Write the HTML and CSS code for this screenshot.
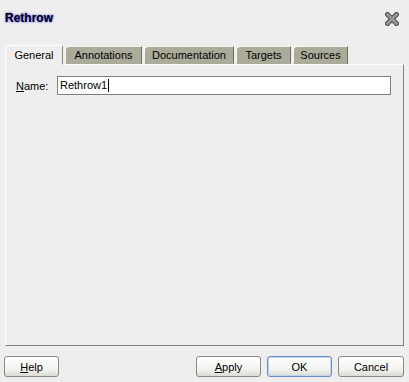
FILE: index.html
```html
<!DOCTYPE html>
<html lang="en">
<head>
    <meta charset="UTF-8">
    <meta name="viewport" content="width=device-width, initial-scale=1.0">
    <title>Rethrow</title>
    <link rel="stylesheet" href="styles.css">
</head>
<body>

    <div class="dialog">
        <header>
            <div class="title">Rethrow</div>
            <a href="#" class="close" title="Close">
                <svg width="14" height="14" viewBox="0 0 14 14">
                    <path d="M2.5 2.5 L11.5 11.5 M11.5 2.5 L2.5 11.5" stroke="#555" stroke-width="5" stroke-linecap="square"/>
                    <path d="M2.5 2.5 L11.5 11.5 M11.5 2.5 L2.5 11.5" stroke="#9a9a9a" stroke-width="2.6" stroke-linecap="square"/>
                </svg>
            </a>
        </header>

        <nav class="tabs">
            <a href="#" class="tab tab-general active">General</a>
            <a href="#" class="tab tab-annotations">Annotations</a>
            <a href="#" class="tab tab-docs">Documentation</a>
            <a href="#" class="tab tab-targets">Targets</a>
            <a href="#" class="tab tab-sources">Sources</a>
        </nav>

        <div class="panel">
            <div class="row">
                <label><u>N</u>ame:</label>
                <div class="textbox">Rethrow1<span class="caret"></span></div>
            </div>
        </div>

        <div class="buttons">
            <button type="button" class="help"><u>H</u>elp</button>
            <div class="right">
                <button type="button"><u>A</u>pply</button>
                <button type="button" class="default">OK</button>
                <button type="button" class="cancel">Cancel</button>
            </div>
        </div>
    </div>

</body>
</html>
```

FILE: styles.css
```css
body {
    font-family: "Liberation Sans", Arial, sans-serif;
    font-size: 11px;
    margin: 0;
    padding: 0;
    background-color: #eeeeee;
    color: #000;
}
.dialog {
    height: 382px;
    display: flex;
    flex-direction: column;
}
header {
    height: 45px;
    padding: 0 10px 0 5px;
    display: flex;
    justify-content: space-between;
    align-items: center;
    box-sizing: border-box;
}
header .title {
    font-size: 12px;
    font-weight: bold;
    color: #000;
    text-shadow: 0 0 2px #6a6aff, 0 0 1px #8a8aff, 0 0 3px #b0b0ff;
    margin-top: -9px;
}
header .close {
    display: block;
    width: 14px;
    height: 14px;
    margin-top: -8px;
}
header .close svg {
    display: block;
}
.tabs {
    display: flex;
    align-items: flex-end;
    gap: 2px;
    height: 19px;
    margin: 0 5px;
    position: relative;
    z-index: 1;
}
.tab {
    height: 18px;
    line-height: 17px;
    padding: 0;
    text-align: center;
    box-sizing: border-box;
    background-color: #abab99;
    color: #000;
    text-decoration: none;
    border: 1px solid;
    border-color: #f4f4f0 #6e6e60 transparent #f4f4f0;
    border-top-left-radius: 5px 4px;
    border-top-right-radius: 1px;
}
.tab.active {
    height: 20px;
    margin-bottom: -1px;
    line-height: 18px;
    background-color: #eeeeee;
    border-color: #fff #8a8a8a #eeeeee #fff;
}
.tab-general { width: 58px; }
.tab-annotations { width: 77px; }
.tab-docs { width: 90px; }
.tab-targets { width: 55px; }
.tab-sources { width: 55px; }
.panel {
    flex: 1;
    margin: 0 5px;
    border: 1px solid;
    border-color: #fff #808080 #808080 #fff;
    padding: 11px 10px;
}
.row {
    display: flex;
    align-items: center;
}
.row label {
    width: 41px;
}
.textbox {
    width: 334px;
    height: 19px;
    box-sizing: border-box;
    border: 1px solid #7f7f7f;
    background-color: #fff;
    padding: 0 2px;
    line-height: 17px;
    display: flex;
    align-items: center;
}
.caret {
    display: inline-block;
    width: 1px;
    height: 13px;
    background-color: #000;
    margin-left: 1px;
}
.buttons {
    display: flex;
    justify-content: space-between;
    padding: 10px 5px 5px 4px;
}
.buttons .right {
    display: flex;
    gap: 6px;
}
button {
    font-family: "Liberation Sans", Arial, sans-serif;
    font-size: 11px;
    width: 65px;
    height: 21px;
    padding: 0;
    color: #000;
    background: linear-gradient(#ffffff, #f4f4f2 60%, #dcdcd6);
    border: 1px solid #8a8a80;
    border-radius: 3px;
}
button.help {
    width: 55px;
}
button.cancel {
    width: 66px;
}
button.default {
    border-color: #6a8cc8;
    box-shadow: inset 0 0 0 1px #c2d4f0;
}
```
